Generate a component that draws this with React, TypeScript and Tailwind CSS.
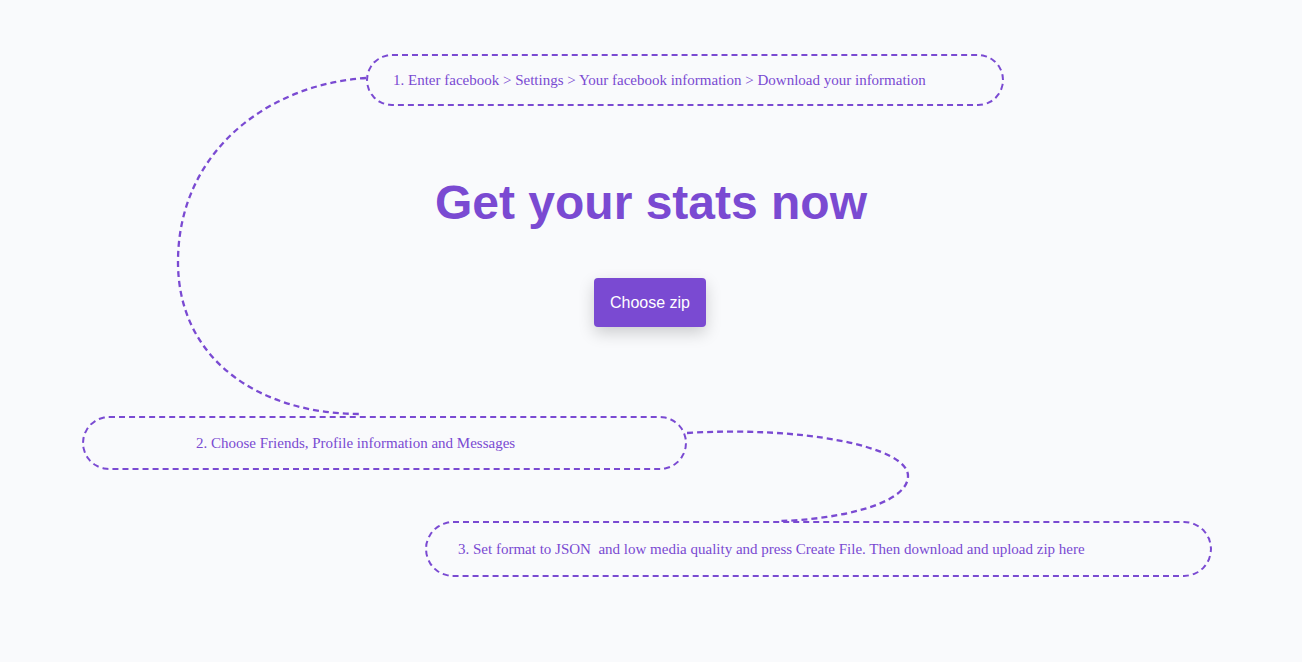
export default function App() {
  return (
    <div className="relative h-[662px] w-full overflow-hidden bg-[#f9fafc]">
      <svg
        className="pointer-events-none absolute inset-0"
        width="1302"
        height="662"
        viewBox="0 0 1302 662"
        fill="none"
      >
        <path
          d="M366 78 C 270 84, 178 150, 178 262 C 178 360, 260 414, 360 414"
          stroke="#7a4ad2"
          strokeWidth="2.3"
          strokeDasharray="6 4"
        />
        <path
          d="M687 433 C 800 426, 908 446, 908 476 C 908 506, 830 520, 780 521"
          stroke="#7a4ad2"
          strokeWidth="2.3"
          strokeDasharray="6 4"
        />
      </svg>

      <div className="relative flex flex-col pt-[54px] font-['Liberation_Serif',serif] text-[15px] text-[#7a4ad2]">
        <div className="ml-[366px] flex h-[52px] w-[638px] items-center rounded-full border-2 border-dashed border-[#7a4ad2] pl-[25px] pt-[1px]">
          1. Enter facebook &gt; Settings &gt; Your facebook information &gt; Download your information
        </div>

        <h1 className="mt-[69px] text-center font-['Liberation_Sans',Arial,sans-serif] text-[48px] font-bold leading-[56px] text-[#7a4ad2]">
          Get your stats now
        </h1>

        <div className="mt-[47px] flex justify-center">
          <button className="-ml-[2px] h-[49px] w-[112px] rounded-[4px] bg-[#7a4ad2] font-['Liberation_Sans',Arial,sans-serif] text-[16px] text-white shadow-[0_6px_16px_rgba(0,0,0,0.18)]">
            Choose zip
          </button>
        </div>

        <div className="ml-[82px] mt-[89px] flex h-[54px] w-[605px] items-center rounded-full border-2 border-dashed border-[#7a4ad2] pl-[112px]">
          2. Choose Friends, Profile information and Messages
        </div>

        <div className="ml-[425px] mt-[51px] flex h-[56px] w-[787px] items-center whitespace-pre rounded-full border-2 border-dashed border-[#7a4ad2] pl-[31px]">
          3. Set format to JSON  and low media quality and press Create File. Then download and upload zip here
        </div>
      </div>
    </div>
  );
}
